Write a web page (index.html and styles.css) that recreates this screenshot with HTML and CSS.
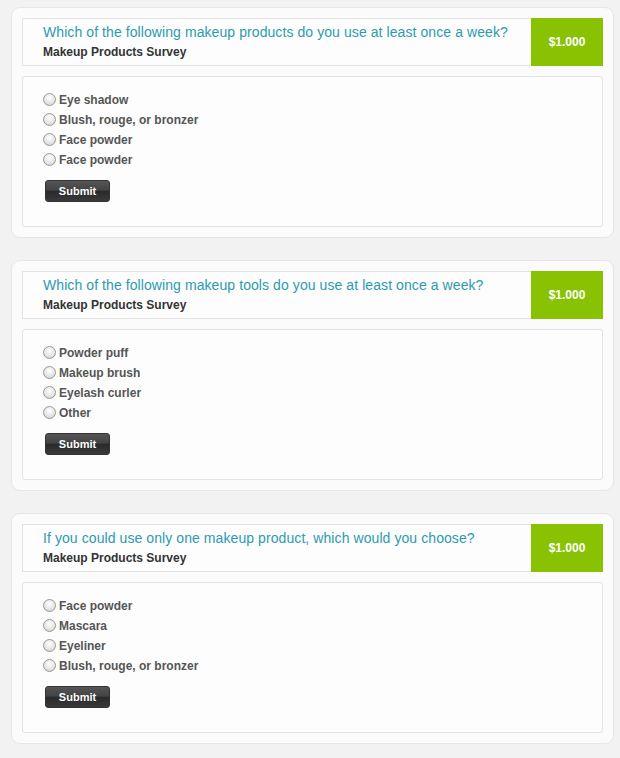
FILE: index.html
```html
<!DOCTYPE html>
<html>
<head>
<meta charset="utf-8">
<link rel="stylesheet" href="styles.css">
</head>
<body>
<div class="list">
  <div class="card">
    <div class="head">
      <div class="head-text">
        <div class="title">Which of the following makeup products do you use at least once a week?</div>
        <div class="sub">Makeup Products Survey</div>
      </div>
      <div class="price">$1.000</div>
    </div>
    <div class="body">
      <ul class="opts">
        <li><span class="radio"></span>Eye shadow</li>
        <li><span class="radio"></span>Blush, rouge, or bronzer</li>
        <li><span class="radio"></span>Face powder</li>
        <li><span class="radio"></span>Face powder</li>
      </ul>
      <button class="btn">Submit</button>
    </div>
  </div>
  <div class="card">
    <div class="head">
      <div class="head-text">
        <div class="title">Which of the following makeup tools do you use at least once a week?</div>
        <div class="sub">Makeup Products Survey</div>
      </div>
      <div class="price">$1.000</div>
    </div>
    <div class="body">
      <ul class="opts">
        <li><span class="radio"></span>Powder puff</li>
        <li><span class="radio"></span>Makeup brush</li>
        <li><span class="radio"></span>Eyelash curler</li>
        <li><span class="radio"></span>Other</li>
      </ul>
      <button class="btn">Submit</button>
    </div>
  </div>
  <div class="card">
    <div class="head">
      <div class="head-text">
        <div class="title">If you could use only one makeup product, which would you choose?</div>
        <div class="sub">Makeup Products Survey</div>
      </div>
      <div class="price">$1.000</div>
    </div>
    <div class="body">
      <ul class="opts">
        <li><span class="radio"></span>Face powder</li>
        <li><span class="radio"></span>Mascara</li>
        <li><span class="radio"></span>Eyeliner</li>
        <li><span class="radio"></span>Blush, rouge, or bronzer</li>
      </ul>
      <button class="btn">Submit</button>
    </div>
  </div>
</div>
</body>
</html>
```
FILE: styles.css
```css
html, body {
  margin: 0;
  padding: 0;
  background: #f2f2f2;
  font-family: "Liberation Sans", Arial, sans-serif;
}
.list {
  padding: 7px 6px 0 11px;
  display: flex;
  flex-direction: column;
  gap: 22px;
}
.card {
  width: 581px;
  background: #fbfbfb;
  border: 1px solid #e6e6e6;
  border-radius: 9px;
  padding: 10px;
  display: flex;
  flex-direction: column;
  gap: 10px;
}
.head {
  display: flex;
  background: #fdfdfd;
  border: 1px solid #e3e3e3;
  height: 46px;
}
.head-text {
  flex: 1;
  padding: 4px 0 0 20px;
}
.title {
  font-size: 14px;
  line-height: 18px;
  color: #2c9bb0;
  letter-spacing: 0.08px;
}
.sub {
  font-size: 12px;
  line-height: 16px;
  font-weight: bold;
  color: #333;
  margin-top: 3px;
}
.price {
  width: 72px;
  background: #88c202;
  color: #fff;
  font-size: 12px;
  font-weight: bold;
  display: flex;
  align-items: center;
  justify-content: center;
  margin: -1px -1px -1px 0;
}
.body {
  background: #fdfdfd;
  border: 1px solid #e3e3e3;
  border-radius: 3px;
  padding: 13px 20px 24px 20px;
}
.opts {
  list-style: none;
  margin: 0;
  padding: 0;
}
.opts li {
  display: flex;
  align-items: center;
  height: 20px;
  font-size: 12px;
  font-weight: bold;
  color: #555;
}
.radio {
  width: 11px;
  height: 11px;
  border-radius: 50%;
  border: 1px solid #9a9a9a;
  background: radial-gradient(circle at 50% 35%, #ffffff 0%, #e6e6e6 55%, #c8c8c8 100%);
  margin-right: 3px;
  margin-top: -2px;
  flex: none;
}
.btn {
  margin: 10px 0 0 2px;
  width: 65px;
  height: 22px;
  border: 1px solid #333;
  border-radius: 3px;
  background: linear-gradient(#555 0%, #444 45%, #2a2a2a 52%, #3a3a3a 100%);
  color: #fff;
  font-family: "Liberation Sans", Arial, sans-serif;
  font-size: 11px;
  font-weight: bold;
  padding: 0;
  display: block;
}
```
